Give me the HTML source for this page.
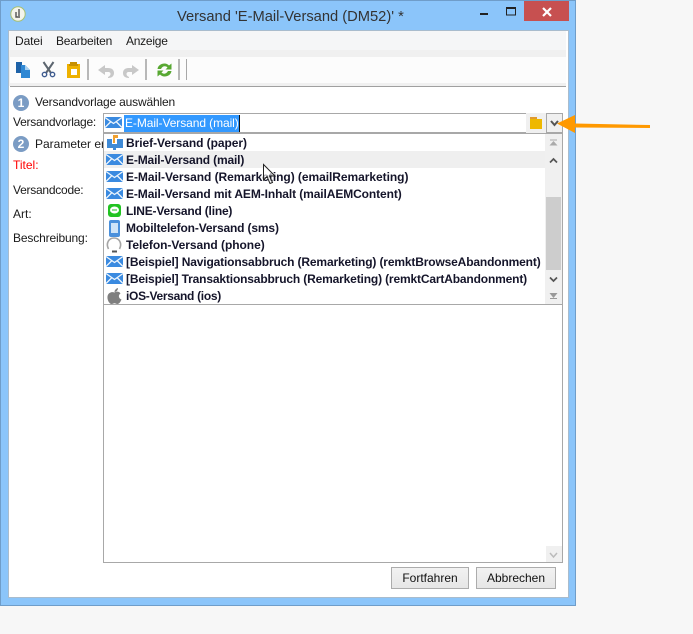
<!DOCTYPE html>
<html><head><meta charset="utf-8">
<style>
html,body{margin:0;padding:0;background:#f7f7f7;}
#p{position:relative;width:693px;height:634px;overflow:hidden;background:#f7f7f7;font-family:"Liberation Sans",sans-serif;font-size:12px;color:#1a1a1a;}
#p div{position:absolute;box-sizing:border-box;}
.t{white-space:nowrap;line-height:14px;height:14px;}
.b{font-weight:bold;color:#15152a;}
svg{position:absolute;overflow:visible;}
</style></head><body>
<div id="p">
<svg width="0" height="0" style="left:0;top:0"><defs><g id="mail"><rect width="17" height="11" fill="#3a8ae0"/><path d="M0 0.500L8.500 6.500L17 0.500M0 10.500L6 4.500M17 10.500L11 4.500" stroke="#eef6fd" stroke-width="1.300" fill="none"/></g></defs></svg>
<div style="left:0;top:0;width:576px;height:606px;background:#8bc5fa;border:1px solid #6f9dc9;"></div>
<div style="left:8px;top:30px;width:561px;height:568px;background:#fff;border:1px solid #a9bccd;"></div>
<div style="left:9px;top:31px;width:558px;height:19px;background:#f5f6f7;"></div>
<div style="left:9px;top:50px;width:558px;height:36px;background:#f0f0f0;"></div>
<div style="left:10px;top:57px;width:556px;height:26px;background:#fcfcfc;"></div>
<div style="left:10px;top:86px;width:556px;height:1px;background:#a0a0a0;"></div>
<div style="left:566px;top:31px;width:2px;height:566px;background:#fff;"></div>
<!-- title -->
<svg style="left:10px;top:6px" width="16" height="16" viewBox="0 0 16 16"><circle cx="8" cy="8" r="7.200" fill="#f4f4ec" stroke="#a8c070" stroke-width="1"/><path d="M9 3v7M6 6v5h4" stroke="#555" stroke-width="1.400" fill="none"/></svg>
<div class="t" style="left:177px;top:9px;font-size:14.700px;color:#333;line-height:16px;height:16px;">Versand 'E-Mail-Versand (DM52)' *</div>
<svg style="left:480px;top:7px" width="36" height="10"><rect y="6" x="0" width="8" height="2" fill="#222"/><rect x="26.500" y="0.500" width="9" height="7.500" fill="none" stroke="#222"/><rect x="26" y="0" width="10" height="2" fill="#222"/></svg>
<div style="left:524px;top:1px;width:45px;height:20px;background:#c75050;"></div>
<svg style="left:541px;top:6px" width="12" height="12"><path d="M2 2L10 10M10 2L2 10" stroke="#fff" stroke-width="2.200"/></svg>
<!-- menu -->
<div class="t" style="left:15px;top:34px;letter-spacing:-0.1px;">Datei</div>
<div class="t" style="left:56px;top:34px;letter-spacing:-0.2px;">Bearbeiten</div>
<div class="t" style="left:126px;top:34px;letter-spacing:-0.25px;">Anzeige</div>
<!-- toolbar -->
<svg style="left:16px;top:62px" width="15" height="16" viewBox="0 0 15 16"><rect x="0" y="0" width="6" height="11" fill="#1e62a8"/><path d="M5 3h4l5 5v8H5z" fill="#2f88d4"/><path d="M9 3l5 5h-5z" fill="#a8d0f0"/></svg>
<svg style="left:41px;top:61px" width="15" height="17" viewBox="0 0 15 17"><path d="M2.500 1L10 12M12.500 1L5 12" stroke="#5d6670" stroke-width="2"/><circle cx="3.500" cy="13.500" r="2.200" fill="none" stroke="#3f5c90" stroke-width="1.400"/><circle cx="11.500" cy="13.500" r="2.200" fill="none" stroke="#3f5c90" stroke-width="1.400"/></svg>
<svg style="left:67px;top:61px" width="14" height="17" viewBox="0 0 14 17"><rect x="0" y="3" width="13" height="14" fill="#eeb100"/><path d="M3 3V1h7v2h1v2H2V3z" fill="#c78f00"/><rect x="4" y="8" width="6" height="6" fill="#fff"/></svg>
<div style="left:87px;top:59px;width:2px;height:21px;background:#b8b8b8;"></div>
<svg style="left:98px;top:65px" width="16" height="13" viewBox="0 0 16 13"><path d="M7 0L0 5L7 10V7h3c2 0 2.500 1 2.500 2s-.5 2-2.500 3v1c4 0 6-2 6-5c0-3-2-5-6-5H7z" fill="#c8c8c8"/></svg>
<svg style="left:123px;top:65px" width="16" height="13" viewBox="0 0 16 13"><path d="M9 0L16 5L9 10V7H6c-2 0-2.500 1-2.500 2s.5 2 2.500 3v1c-4 0-6-2-6-5c0-3 2-5 6-5h3z" fill="#c8c8c8"/></svg>
<div style="left:145px;top:59px;width:2px;height:21px;background:#b8b8b8;"></div>
<svg style="left:157px;top:63px" width="15" height="14" viewBox="0 0 15 14"><path d="M0.500 6C1 2.500 4 0.500 7.500 0.500c2 0 3.500 1 4.500 2L14.500 0.500V6.500H8.500l2-2c-2-2-5-1.500-6.500 1.500z" fill="#58a832"/><path d="M14.500 8C14 11.500 11 13.500 7.500 13.500c-2 0-3.500-1-4.500-2L0.500 13.500V7.500h6l-2 2c2 2 5 1.500 6.500-1.500z" fill="#58a832"/></svg>
<div style="left:178px;top:59px;width:2px;height:21px;background:#b8b8b8;"></div>
<div style="left:186px;top:59px;width:1px;height:21px;background:#a8a8a8;"></div>
<!-- step 1 -->
<div style="left:13px;top:95px;width:16px;height:16px;border-radius:50%;background:#7b9cc4;color:#fff;font-weight:bold;font-size:12px;text-align:center;line-height:16px;">1</div>
<div class="t" style="left:35px;top:95px;letter-spacing:-0.17px;">Versandvorlage auswählen</div>
<div class="t" style="left:13px;top:115px;letter-spacing:-0.25px;">Versandvorlage:</div>
<!-- combo -->
<div style="left:103px;top:113px;width:424px;height:20px;background:#fff;border:1px solid #a8a8a8;border-width:1px 0 1px 1px;"></div>
<svg style="left:105px;top:117px" width="17" height="11"><use href="#mail"/></svg>
<div class="t" style="left:124px;top:115px;width:116px;height:17px;background:#3399ff;color:#fff;line-height:16px;padding-left:1px;letter-spacing:-0.08px;">E-Mail-Versand (mail)</div>
<div style="left:239px;top:115px;width:1px;height:17px;background:#111;"></div>
<div style="left:526px;top:113px;width:20px;height:20px;background:#f0f0f0;"></div>
<svg style="left:530px;top:117px" width="12" height="12" viewBox="0 0 12 12"><rect y="2" width="12" height="10" fill="#eeb800"/><rect y="0" width="7" height="2" fill="#e09a30"/></svg>
<div style="left:546px;top:113px;width:17px;height:20px;background:#f0f0f0;border:1px solid #a8a8a8;"></div>
<svg style="left:550px;top:120px" width="9" height="7"><path d="M1 1L4.500 5L8 1" stroke="#555" stroke-width="2" fill="none"/></svg>
<!-- behind -->
<div style="left:13px;top:136px;width:16px;height:16px;border-radius:50%;background:#7b9cc4;color:#fff;font-weight:bold;font-size:12px;text-align:center;line-height:16px;">2</div>
<div class="t" style="left:35px;top:137px;">Parameter er</div>
<div class="t" style="left:13px;top:158px;color:#f00;">Titel:</div>
<div class="t" style="left:13px;top:183px;letter-spacing:-0.25px;">Versandcode:</div>
<div class="t" style="left:13px;top:207px;">Art:</div>
<div class="t" style="left:13px;top:231px;letter-spacing:-0.15px;">Beschreibung:</div>
<!-- list -->
<div style="left:103px;top:133px;width:460px;height:430px;background:#fff;border:1px solid #a8a8a8;"></div>
<div style="left:103px;top:304px;width:460px;height:1px;background:#a8a8a8;"></div>
<div style="left:104px;top:151px;width:441px;height:17px;background:#efefef;"></div>
<div style="left:545px;top:134px;width:17px;height:170px;background:#f0f0f0;"></div>
<div style="left:546px;top:197px;width:15px;height:73px;background:#cdcdcd;"></div>
<div style="left:546px;top:546px;width:16px;height:16px;background:#f0f0f0;"></div>
<svg style="left:549px;top:138px" width="12" height="160"><path d="M1 2H8" stroke="#aaa" stroke-width="1"/><path d="M0.500 7.500L4.500 3L8.500 7.500z" fill="#aaa"/><path d="M1 24.500L4.500 21L8 24.500" stroke="#555" stroke-width="1.700" fill="none"/><path d="M1 139.500L4.500 143L8 139.500" stroke="#555" stroke-width="1.700" fill="none"/><path d="M1 160.500H8" stroke="#999"/><path d="M0.500 155L4.500 160L8.500 155z" fill="#999"/></svg>
<svg style="left:549px;top:552px" width="10" height="6"><path d="M1 1L4.500 5L8 1" stroke="#bbb" stroke-width="1.500" fill="none"/></svg>

<svg style="left:106px;top:134px" width="18" height="16" viewBox="0 0 18 16"><rect x="1" y="5" width="5" height="9" fill="#3f8ad6"/><rect x="11" y="5" width="6" height="9" fill="#3f8ad6"/><rect x="6" y="10" width="5" height="4" fill="#3f8ad6"/><path d="M7 1h5v3H9v5H7z" fill="#f0a030"/><rect x="7" y="14" width="3" height="2" fill="#3f8ad6"/></svg>
<div class="t b" style="left:126px;top:136px;letter-spacing:-0.05px;">Brief-Versand (paper)</div>
<svg style="left:106px;top:154px" width="17" height="11"><use href="#mail"/></svg>
<div class="t b" style="left:126px;top:153px;letter-spacing:-0.15px;">E-Mail-Versand (mail)</div>
<svg style="left:106px;top:171px" width="17" height="11"><use href="#mail"/></svg>
<div class="t b" style="left:126px;top:170px;letter-spacing:-0.05px;">E-Mail-Versand (Remarketing) (emailRemarketing)</div>
<svg style="left:106px;top:188px" width="17" height="11"><use href="#mail"/></svg>
<div class="t b" style="left:126px;top:187px;letter-spacing:-0.1px;">E-Mail-Versand mit AEM-Inhalt (mailAEMContent)</div>
<svg style="left:108px;top:204px" width="13" height="13" viewBox="0 0 13 13"><rect width="13" height="13" rx="3" fill="#22c322"/><ellipse cx="6.500" cy="6" rx="4.500" ry="3.500" fill="#fff"/><path d="M4 6h5" stroke="#22c322"/></svg>
<div class="t b" style="left:126px;top:204px;letter-spacing:-0.2px;">LINE-Versand (line)</div>
<svg style="left:109px;top:220px" width="11" height="17" viewBox="0 0 11 17"><rect width="11" height="17" rx="2" fill="#4a90dc"/><rect x="2" y="3" width="7" height="10" fill="#cfe4f8"/></svg>
<div class="t b" style="left:126px;top:221px;letter-spacing:-0.15px;">Mobiltelefon-Versand (sms)</div>
<svg style="left:106px;top:237px" width="16" height="16" viewBox="0 0 16 16"><path d="M2.500 12C-0.500 6 3 1 8 1s8.500 5 5.500 11" fill="none" stroke="#a5a5a5" stroke-width="1.600"/><path d="M6 14.500h5" stroke="#555" stroke-width="2"/></svg>
<div class="t b" style="left:126px;top:238px;letter-spacing:-0.05px;">Telefon-Versand (phone)</div>
<svg style="left:106px;top:256px" width="17" height="11"><use href="#mail"/></svg>
<div class="t b" style="left:126px;top:255px;letter-spacing:-0.15px;">[Beispiel] Navigationsabbruch (Remarketing) (remktBrowseAbandonment)</div>
<svg style="left:106px;top:273px" width="17" height="11"><use href="#mail"/></svg>
<div class="t b" style="left:126px;top:272px;letter-spacing:-0.155px;">[Beispiel] Transaktionsabbruch (Remarketing) (remktCartAbandonment)</div>
<svg style="left:107px;top:288px" width="15" height="16" viewBox="0 0 15 16"><path d="M7.500 4.500C9 3.500 12 3 13.500 5.500C11 7 11.500 10.500 14.500 11.500C13.500 14 12 16 10.500 16C9 16 8.500 15.300 7.500 15.300C6.500 15.300 6 16 4.500 16C2.500 16 0 12 0.500 8.500C1 4.500 5 3.500 7.500 4.500z" fill="#7f7f7f"/><path d="M7.500 4C7.500 2 9 0.500 11 0C11 2 9.500 4 7.500 4z" fill="#7f7f7f"/></svg>
<div class="t b" style="left:126px;top:289px;letter-spacing:-0.3px;">iOS-Versand (ios)</div>
<!-- cursor -->
<svg style="left:263px;top:164px" width="14" height="21" viewBox="0 0 14 21"><path d="M0.500 0.500V16L4 12.500L7 19.500L9.500 18.500L6.500 12H12z" fill="#fff" fill-opacity="0.6" stroke="#222" stroke-width="1"/></svg>
<!-- buttons -->
<div style="left:391px;top:567px;width:78px;height:22px;background:linear-gradient(#f2f2f2,#e6e6e6);border:1px solid #acacac;text-align:center;line-height:20px;color:#111;">Fortfahren</div>
<div style="left:476px;top:567px;width:80px;height:22px;background:linear-gradient(#f2f2f2,#e6e6e6);border:1px solid #acacac;text-align:center;line-height:20px;color:#111;">Abbrechen</div>
<!-- arrow -->
<svg style="left:555px;top:114px" width="100" height="20"><path d="M2 9.500L20 1V9.500L95 11V14L20 13.500V19z" fill="#ff9900"/></svg>
</div>
</body></html>
